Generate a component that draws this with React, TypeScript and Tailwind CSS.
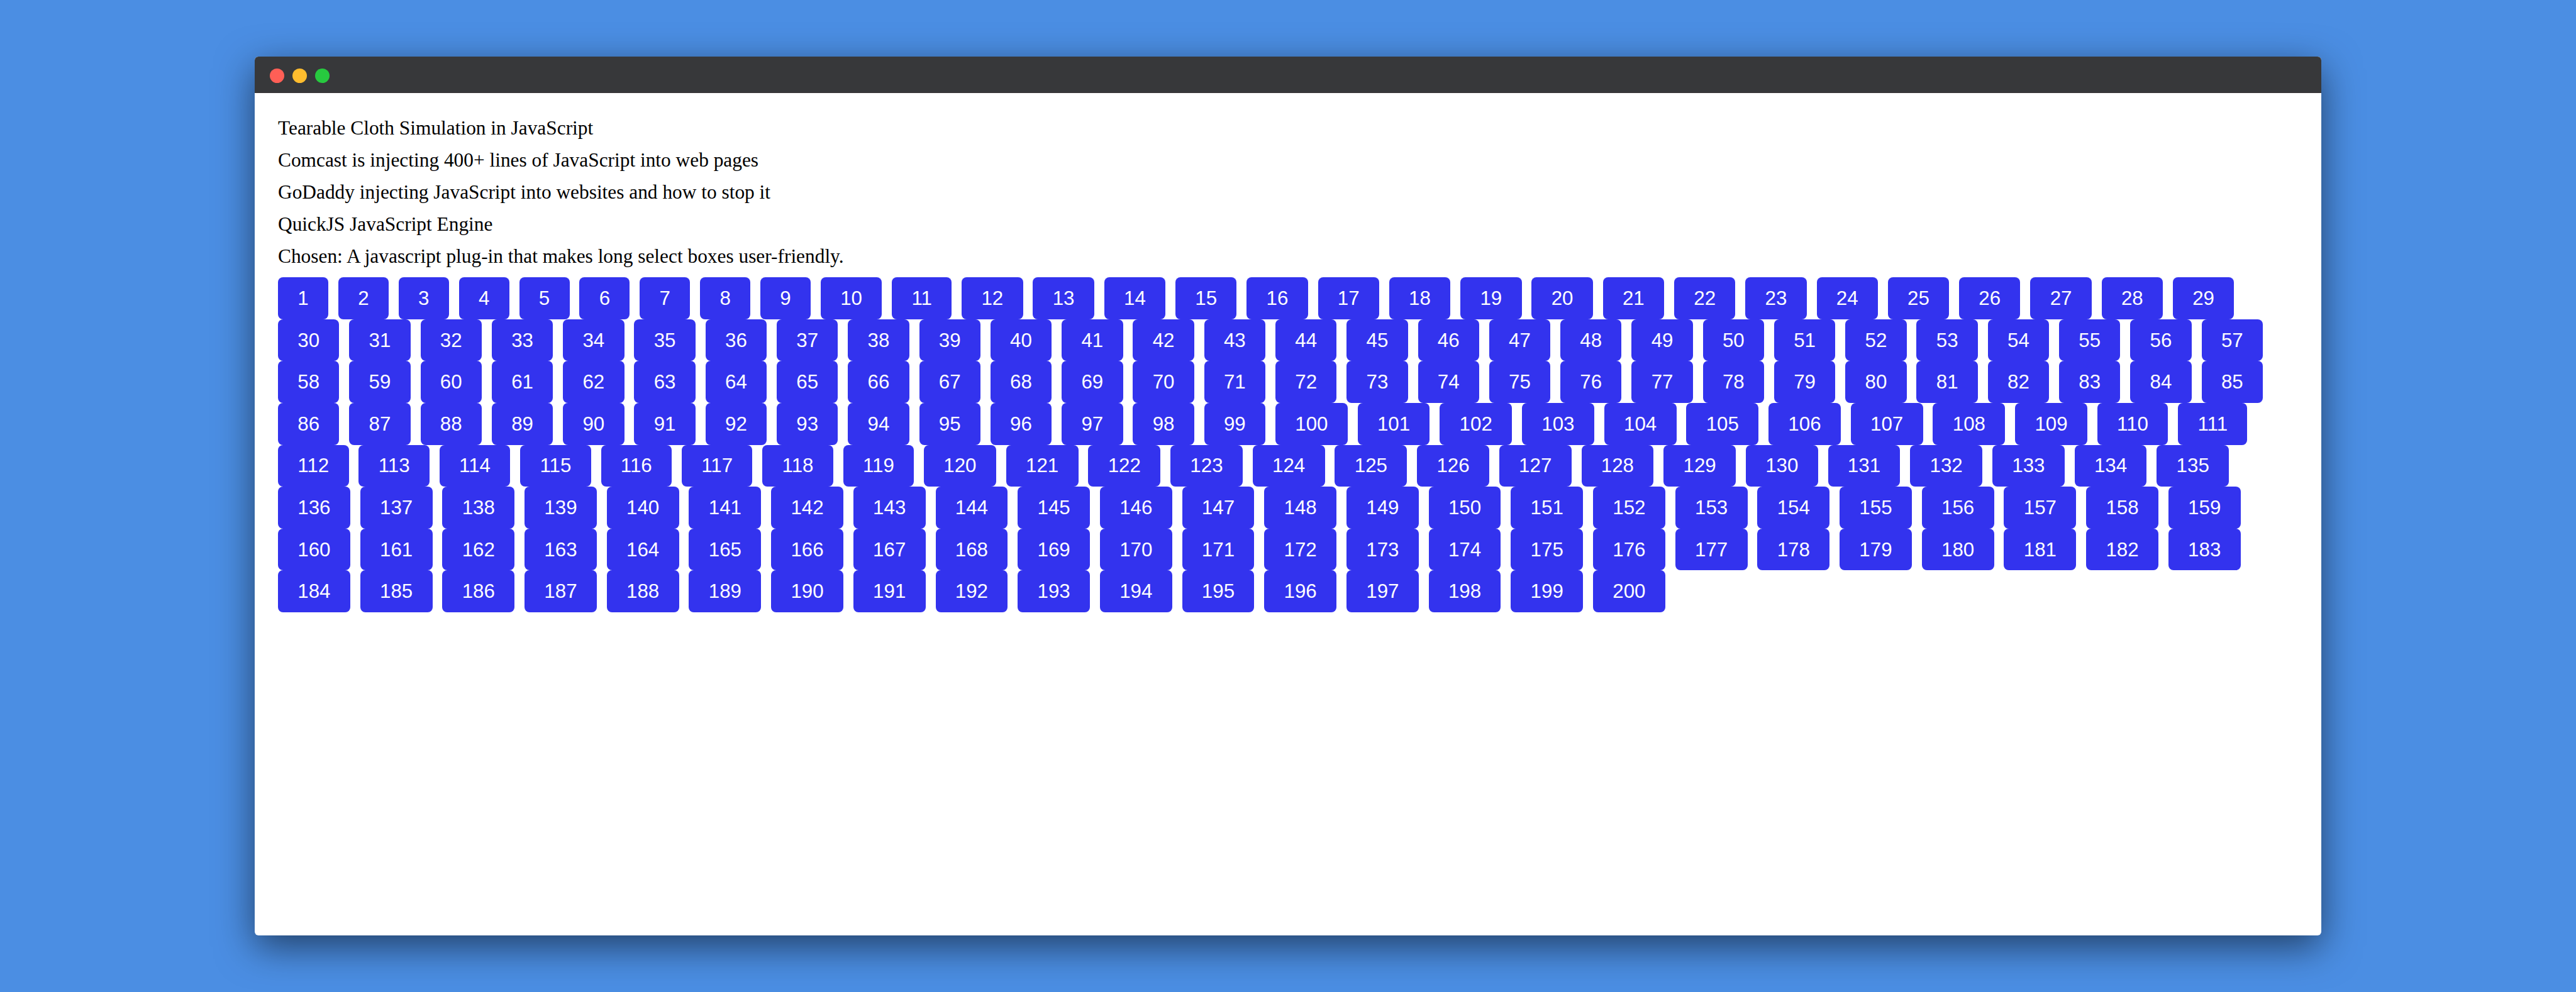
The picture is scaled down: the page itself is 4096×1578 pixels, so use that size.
const titles = [
  'Tearable Cloth Simulation in JavaScript',
  'Comcast is injecting 400+ lines of JavaScript into web pages',
  'GoDaddy injecting JavaScript into websites and how to stop it',
  'QuickJS JavaScript Engine',
  'Chosen: A javascript plug-in that makes long select boxes user-friendly.',
];

// First and last page number of each pagination row.
const rows: [number, number][] = [
  [1, 29],
  [30, 57],
  [58, 85],
  [86, 111],
  [112, 135],
  [136, 159],
  [160, 183],
  [184, 200],
];

function PageButton({ page }: { page: number }) {
  return (
    <button className="h-[66.6px] shrink-0 rounded-[8px] bg-[#3333ee] px-[31.3px] text-[31.3px] leading-[35px] text-white">
      {page}
    </button>
  );
}

function TitleBar() {
  return (
    <div className="flex h-[58px] items-center gap-[13px] border-b border-[#393536] bg-[#37383a] pl-[24px] pt-[4px]">
      <span className="size-[23px] rounded-full bg-[#ff5f56]" />
      <span className="size-[23px] rounded-full bg-[#ffbd2e]" />
      <span className="size-[23px] rounded-full bg-[#27c93f]" />
    </div>
  );
}

export default function App() {
  return (
    <div className="h-[1578px] w-[4096px] overflow-hidden bg-[#4b8ee3] px-[405px] pt-[90px]">
      <div className="h-[1398px] overflow-hidden rounded-[6px] bg-white shadow-[0_18px_61px_rgba(0,0,0,0.55)]">
        <TitleBar />
        <main className="pl-[37px] pt-[31px]">
          <div className="pb-[7.9px] font-['Liberation_Serif',serif] text-[31.36px] leading-[50.88px] text-black">
            {titles.map((title) => (
              <p key={title}>{title}</p>
            ))}
          </div>
          <nav className="font-['Liberation_Sans',sans-serif]">
            {rows.map(([first, last]) => (
              <div key={first} className="flex gap-[15.88px]">
                {Array.from({ length: last - first + 1 }, (_, i) => (
                  <PageButton key={first + i} page={first + i} />
                ))}
              </div>
            ))}
          </nav>
        </main>
      </div>
    </div>
  );
}
